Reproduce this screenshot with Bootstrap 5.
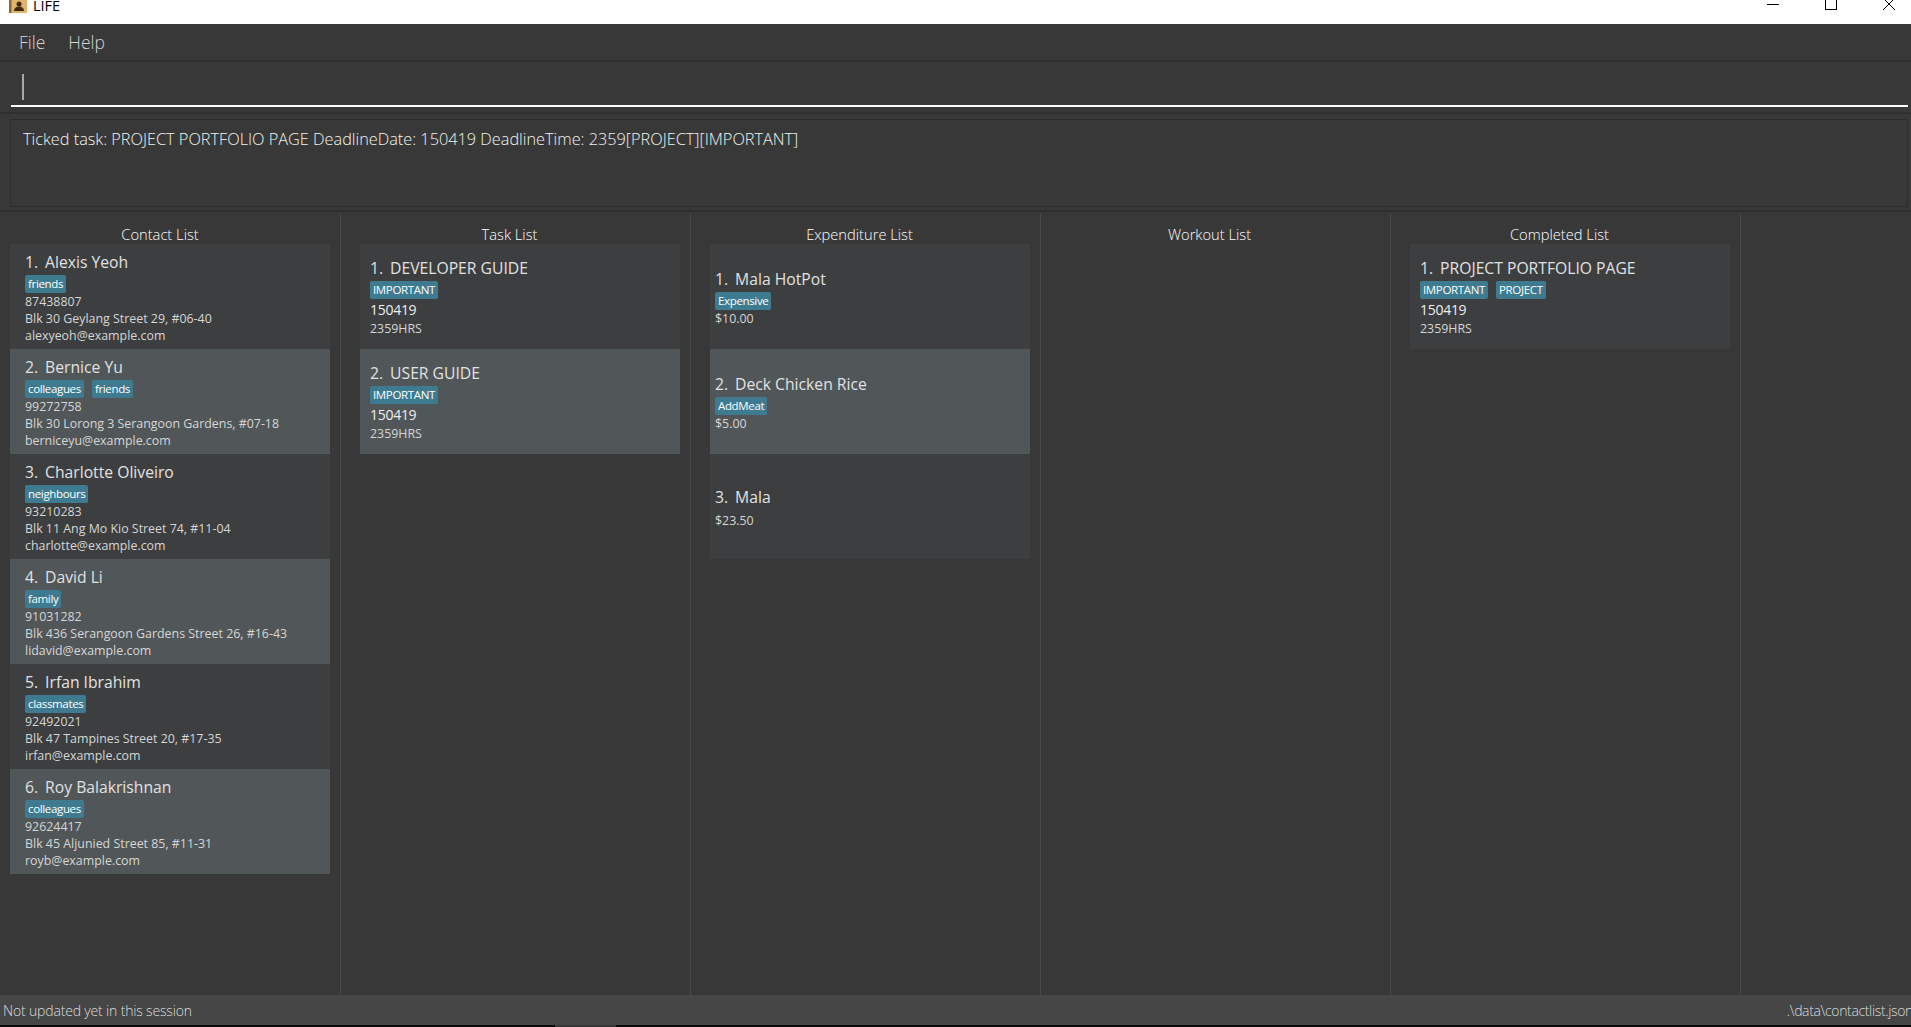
<!DOCTYPE html>
<html lang="en">
<head>
<meta charset="utf-8">
<title>LIFE</title>
<link href="https://cdn.jsdelivr.net/npm/bootstrap@5.3.0/dist/css/bootstrap.min.css" rel="stylesheet">
<style>
html,body{height:1027px;overflow:hidden;background:#383838;}
body{font-family:"Open Sans","Noto Sans",sans-serif;color:#fff;}
.win-bar{height:24px;background:#fff;color:#000;overflow:hidden;padding-left:9px;font-size:14.5px;}
.win-icon{width:18px;height:18px;margin-top:-16px;flex:none;}
.win-name{margin-left:6px;margin-top:-12px;line-height:20px;}
.win-ctl{margin-left:auto;gap:13px;}
.win-btn{width:45px;height:24px;margin-top:-16px;}
.menu-bar{height:38px;border-bottom:2px solid #2e2e2e;padding-left:19px;gap:23px;font-size:17.5px;font-weight:300;color:#d4d4d4;}
.cmd-box{height:52px;padding:12px 3px 0 11px;border-bottom:2px solid #303030;}
.cmd-line{height:33px;border-bottom:2px solid #fff;padding-left:11px;}
.cmd-caret{width:2px;height:26px;background:#a8a8a8;}
.res-wrap{padding:5px 3px 5px 10px;height:98px;border-bottom:2px solid #2e2e2e;}
.res-box{height:88px;border:1px solid #2d2d2d;padding:8px 12px;font-size:16.3px;line-height:22px;color:#f4f4ee;font-weight:300;}
.lists{height:783px;padding-top:2px;}
.list-col{width:350px;flex:none;border-right:1px solid #4a4a4a;padding-left:19px;}
.list-col.first-col{padding-left:10px;width:341px;}
.list-col.last-col{border-right:0;width:auto;flex:1;}
.col-title{height:30px;padding-top:8px;line-height:24px;text-align:center;font-size:14.7px;font-weight:300;width:299px;}
.first-col .col-title{width:300px;}
.item-card{width:320px;height:105px;background:#3c3e3f;color:#d6d6d6;padding-left:10px;font-size:12.4px;line-height:17px;}
.item-card:nth-child(even){background:#515658;}
.contact-card{padding-left:15px;padding-top:2px;}
.exp-card{padding-left:5px;padding-top:2px;}
.item-name{font-size:15.7px;line-height:22px;color:#e2e2e2;font-weight:500;}
.item-num{margin-right:7px;}
.tag-row{gap:8px;height:18px;margin:2px 0 0;}
.tag-chip{background:#3e7b91;color:#fff;height:18px;line-height:18px;padding:0 3px;border-radius:2px;font-size:11.5px;letter-spacing:-.03em;}
.item-date{font-size:14px;font-weight:500;letter-spacing:-.02em;line-height:21px;color:#eee;}
.status-bar{height:30px;background:#464646;padding:0 0 0 3px;font-size:14px;letter-spacing:-.012em;font-weight:300;color:#dcdcdc;white-space:nowrap;overflow:hidden;}
.status-path{margin-right:-2px;letter-spacing:-.025em;}
.task-bar{height:2px;background:#0a0a0a;}
.task-mark{width:61px;margin-left:555px;background:#383838;}
</style>
</head>
<body class="d-flex flex-column">
<div class="win-bar d-flex align-items-center">
  <svg class="win-icon" viewBox="0 0 18 18"><rect x="0" y="0" width="18" height="18" rx="1" fill="#e2b36a"/><rect x="0" y="0" width="2.5" height="18" fill="#8a6a3a"/><circle cx="10" cy="9" r="2.500" fill="#3a2a12"/><path d="M5 16c0-3 2-4.500 5-4.500s5 1.500 5 4.500z" fill="#3a2a12"/></svg>
  <span class="win-name">LIFE</span>
  <div class="win-ctl d-flex">
    <div class="win-btn d-flex align-items-center justify-content-center"><svg width="12" height="12" viewBox="0 0 12 12"><path d="M0 6.500h12" stroke="#000"/></svg></div>
    <div class="win-btn d-flex align-items-center justify-content-center"><svg width="12" height="12" viewBox="0 0 12 12"><rect x=".5" y=".5" width="11" height="11" fill="none" stroke="#000"/></svg></div>
    <div class="win-btn d-flex align-items-center justify-content-center"><svg width="14" height="14" viewBox="0 0 14 14"><path d="M1 1l12 12M13 1L1 13" stroke="#000"/></svg></div>
  </div>
</div>
<div class="menu-bar d-flex align-items-center"><span>File</span><span>Help</span></div>
<div class="cmd-box"><div class="cmd-line"><div class="cmd-caret"></div></div></div>
<div class="res-wrap"><div class="res-box">Ticked task: PROJECT PORTFOLIO PAGE DeadlineDate: 150419 DeadlineTime: 2359[PROJECT][IMPORTANT]</div></div>
<div class="lists d-flex">
  <div class="list-col first-col">
    <div class="col-title">Contact List</div>
    <div>
      <div class="item-card contact-card d-flex flex-column justify-content-center"><div class="item-name"><span class="item-num">1.</span>Alexis Yeoh</div><div class="tag-row d-flex"><span class="tag-chip">friends</span></div><div>87438807</div><div>Blk 30 Geylang Street 29, #06-40</div><div>alexyeoh@example.com</div></div>
      <div class="item-card contact-card d-flex flex-column justify-content-center"><div class="item-name"><span class="item-num">2.</span>Bernice Yu</div><div class="tag-row d-flex"><span class="tag-chip">colleagues</span><span class="tag-chip">friends</span></div><div>99272758</div><div>Blk 30 Lorong 3 Serangoon Gardens, #07-18</div><div>berniceyu@example.com</div></div>
      <div class="item-card contact-card d-flex flex-column justify-content-center"><div class="item-name"><span class="item-num">3.</span>Charlotte Oliveiro</div><div class="tag-row d-flex"><span class="tag-chip">neighbours</span></div><div>93210283</div><div>Blk 11 Ang Mo Kio Street 74, #11-04</div><div>charlotte@example.com</div></div>
      <div class="item-card contact-card d-flex flex-column justify-content-center"><div class="item-name"><span class="item-num">4.</span>David Li</div><div class="tag-row d-flex"><span class="tag-chip">family</span></div><div>91031282</div><div>Blk 436 Serangoon Gardens Street 26, #16-43</div><div>lidavid@example.com</div></div>
      <div class="item-card contact-card d-flex flex-column justify-content-center"><div class="item-name"><span class="item-num">5.</span>Irfan Ibrahim</div><div class="tag-row d-flex"><span class="tag-chip">classmates</span></div><div>92492021</div><div>Blk 47 Tampines Street 20, #17-35</div><div>irfan@example.com</div></div>
      <div class="item-card contact-card d-flex flex-column justify-content-center"><div class="item-name"><span class="item-num">6.</span>Roy Balakrishnan</div><div class="tag-row d-flex"><span class="tag-chip">colleagues</span></div><div>92624417</div><div>Blk 45 Aljunied Street 85, #11-31</div><div>royb@example.com</div></div>
    </div>
  </div>
  <div class="list-col">
    <div class="col-title">Task List</div>
    <div>
      <div class="item-card d-flex flex-column justify-content-center"><div class="item-name"><span class="item-num">1.</span>DEVELOPER GUIDE</div><div class="tag-row d-flex"><span class="tag-chip">IMPORTANT</span></div><div class="item-date">150419</div><div>2359HRS</div></div>
      <div class="item-card d-flex flex-column justify-content-center"><div class="item-name"><span class="item-num">2.</span>USER GUIDE</div><div class="tag-row d-flex"><span class="tag-chip">IMPORTANT</span></div><div class="item-date">150419</div><div>2359HRS</div></div>
    </div>
  </div>
  <div class="list-col">
    <div class="col-title">Expenditure List</div>
    <div>
      <div class="item-card exp-card d-flex flex-column justify-content-center"><div class="item-name"><span class="item-num">1.</span>Mala HotPot</div><div class="tag-row d-flex"><span class="tag-chip">Expensive</span></div><div>$10.00</div></div>
      <div class="item-card exp-card d-flex flex-column justify-content-center"><div class="item-name"><span class="item-num">2.</span>Deck Chicken Rice</div><div class="tag-row d-flex"><span class="tag-chip">AddMeat</span></div><div>$5.00</div></div>
      <div class="item-card exp-card d-flex flex-column justify-content-center"><div class="item-name"><span class="item-num">3.</span>Mala</div><div class="mt-1">$23.50</div></div>
    </div>
  </div>
  <div class="list-col">
    <div class="col-title">Workout List</div>
  </div>
  <div class="list-col">
    <div class="col-title">Completed List</div>
    <div>
      <div class="item-card d-flex flex-column justify-content-center"><div class="item-name"><span class="item-num">1.</span>PROJECT PORTFOLIO PAGE</div><div class="tag-row d-flex"><span class="tag-chip">IMPORTANT</span><span class="tag-chip">PROJECT</span></div><div class="item-date">150419</div><div>2359HRS</div></div>
    </div>
  </div>
  <div class="list-col last-col"></div>
</div>
<div class="status-bar d-flex align-items-center justify-content-between"><span>Not updated yet in this session</span><span class="status-path">.\data\contactlist.json</span></div>
<div class="task-bar d-flex"><div class="task-mark"></div></div>
</body>
</html>
